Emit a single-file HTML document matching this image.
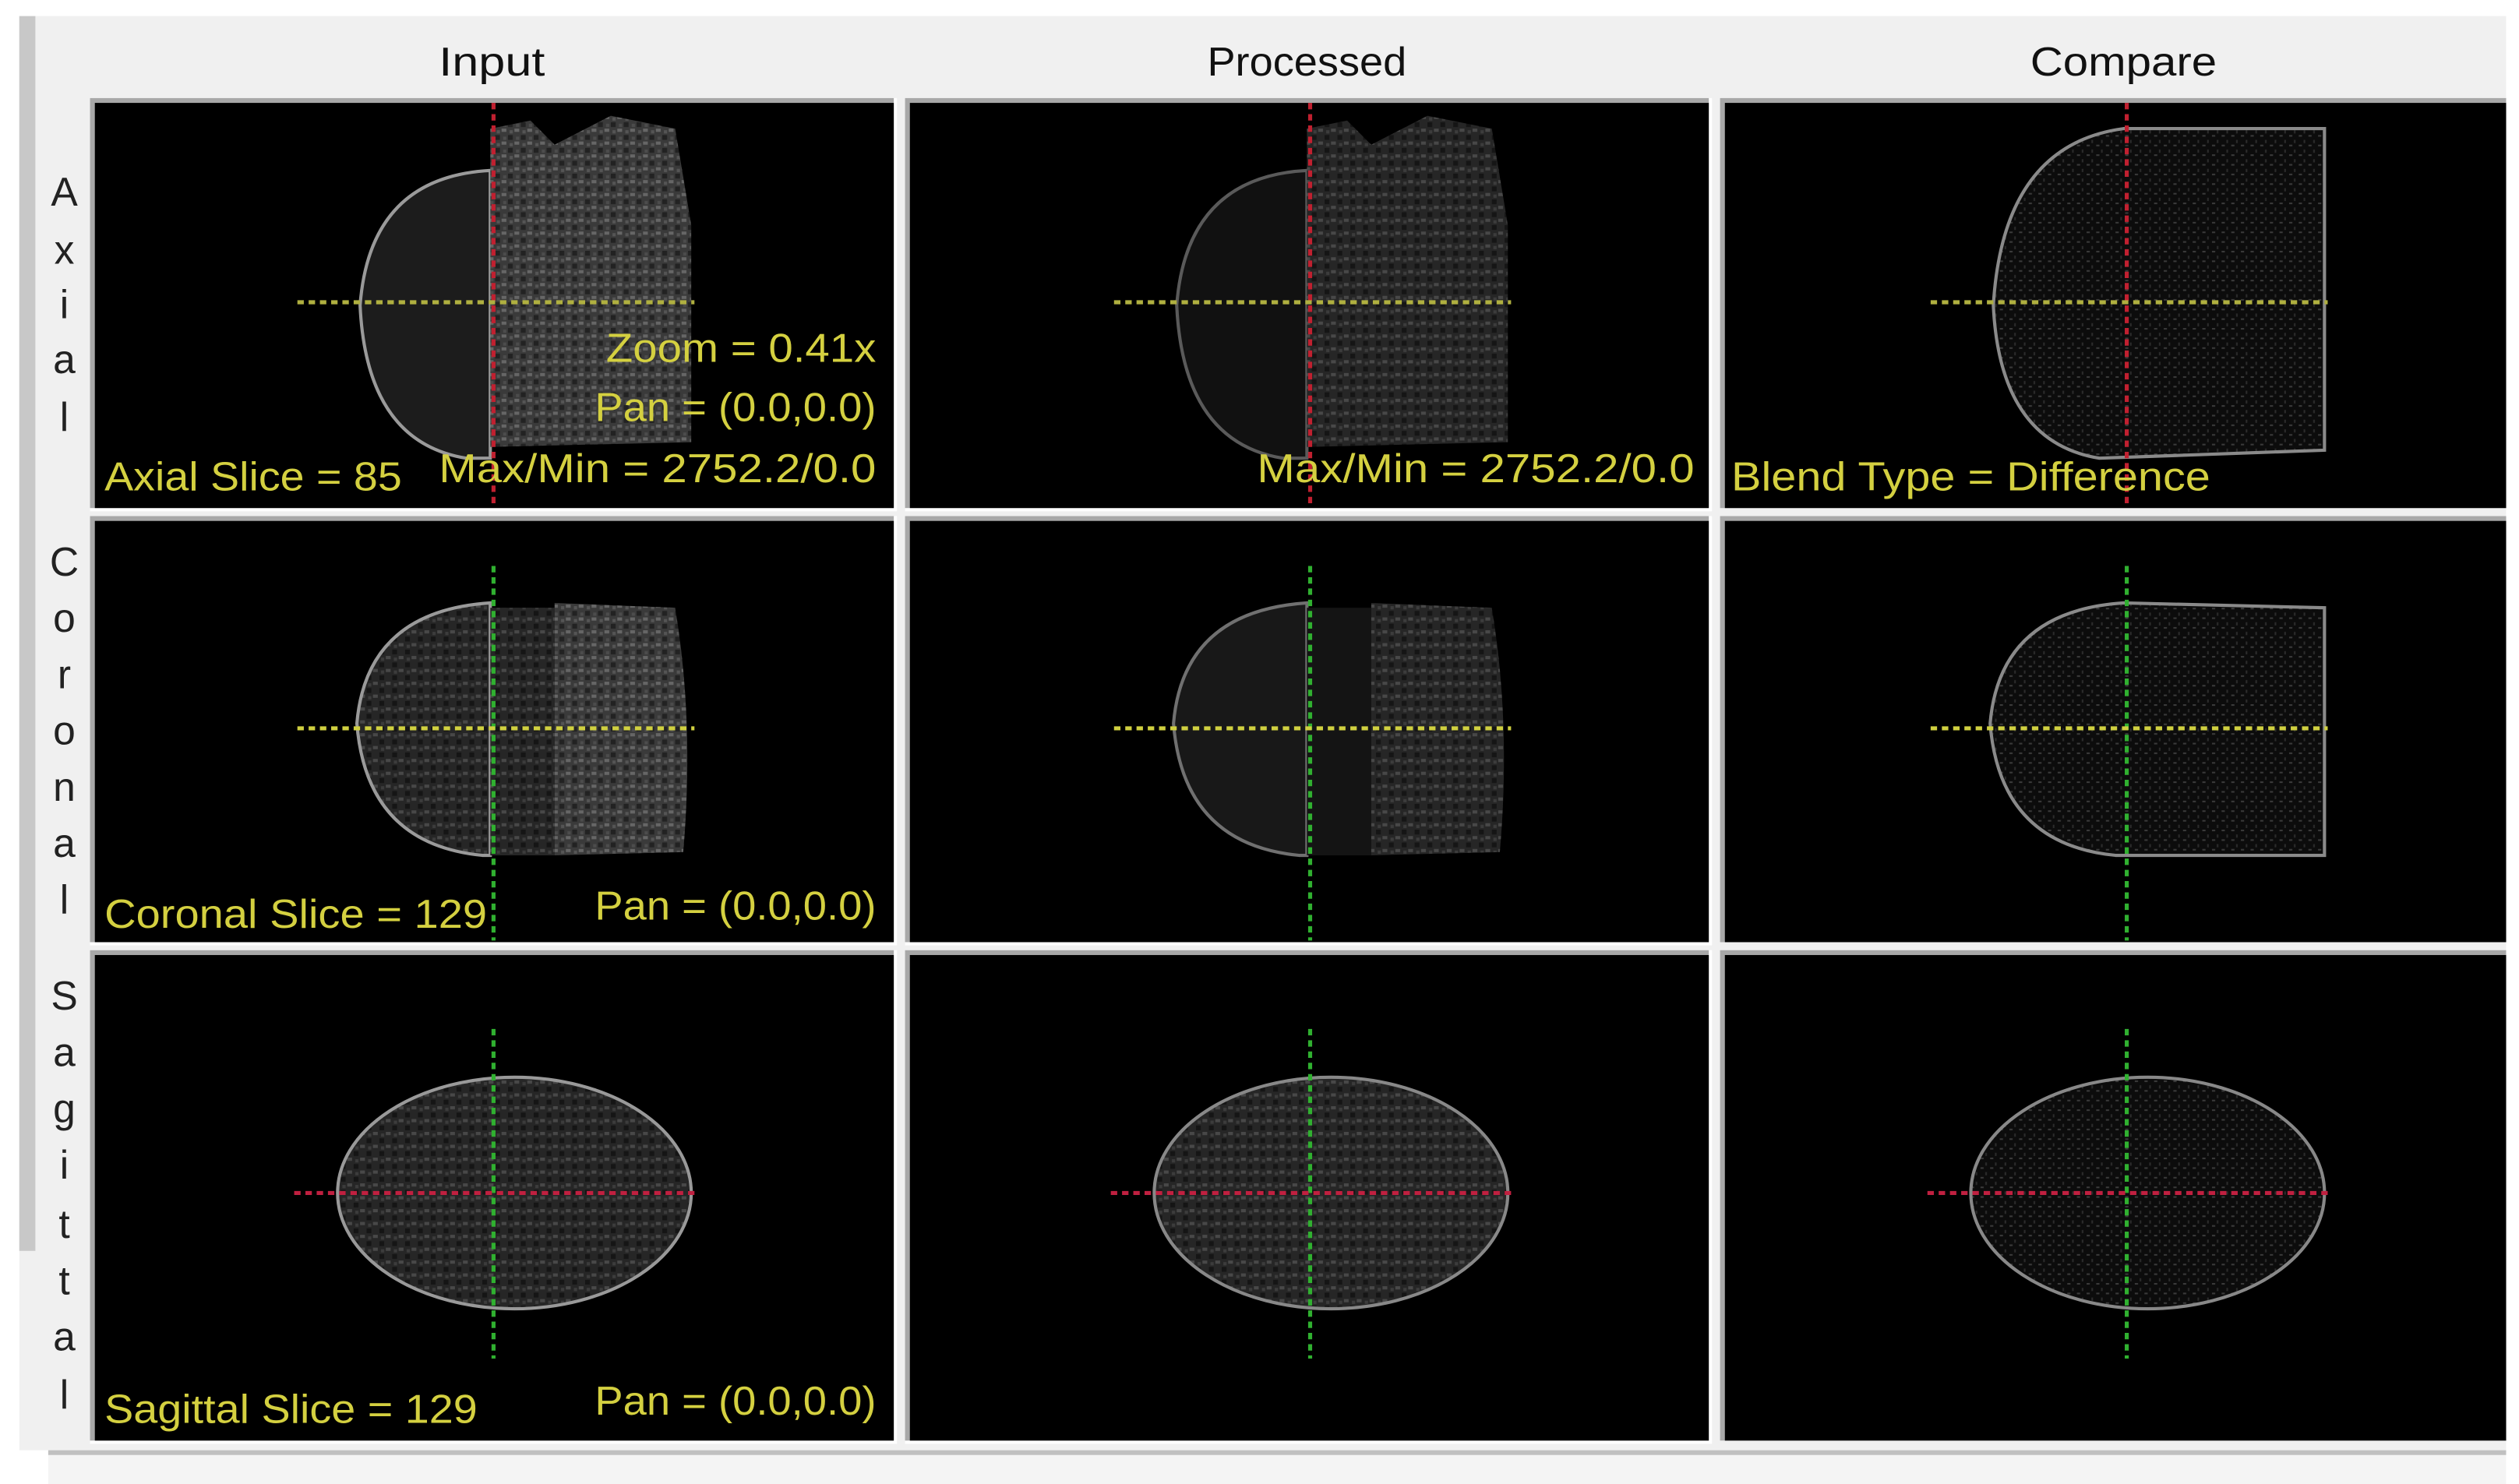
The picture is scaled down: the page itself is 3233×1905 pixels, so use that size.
<!DOCTYPE html>
<html><head><meta charset="utf-8"><style>
html,body{margin:0;padding:0;background:#fff;width:3233px;height:1905px;overflow:hidden}
svg{display:block}
text{font-family:"Liberation Sans",sans-serif}
.y{fill:#d4d040;font-size:25px}
.h{fill:#111;font-size:25px}
.v{fill:#222;font-size:25px;text-anchor:middle}
</style></head><body>
<svg width="3233" height="1905" viewBox="0 0 1567 923" preserveAspectRatio="none" xmlns="http://www.w3.org/2000/svg">
<defs>
<pattern id="tex" width="8" height="8" patternUnits="userSpaceOnUse">
<rect width="8" height="8" fill="#3a3a3a"/><rect x="0" y="0" width="3" height="2" fill="#666"/><rect x="4" y="4" width="3" height="3" fill="#222"/><rect x="5" y="1" width="2" height="2" fill="#555"/><rect x="1" y="5" width="2" height="2" fill="#4c4c4c"/>
</pattern>
<pattern id="tex2" width="8" height="8" patternUnits="userSpaceOnUse">
<rect width="8" height="8" fill="#262626"/><rect x="0" y="0" width="3" height="2" fill="#484848"/><rect x="4" y="4" width="3" height="3" fill="#151515"/><rect x="5" y="1" width="2" height="2" fill="#3c3c3c"/>
</pattern>
<pattern id="tex3" width="6" height="6" patternUnits="userSpaceOnUse">
<rect width="6" height="6" fill="#0c0c0c"/><rect x="0" y="0" width="2" height="1" fill="#3a3a3a"/><rect x="3" y="3" width="1" height="2" fill="#2c2c2c"/>
</pattern>
</defs>
<rect x="0" y="0" width="1567" height="923" fill="#fff"/>
<rect x="12" y="10" width="1547" height="892" fill="#f0f0f0"/>
<rect x="12" y="10" width="10" height="768" fill="#c8c8c8"/>
<rect x="30" y="902" width="1529" height="3" fill="#c0c0c0"/>
<rect x="30" y="905" width="1529" height="18" fill="#f4f4f4"/>

<text class="h" x="306" y="47" text-anchor="middle" textLength="66" lengthAdjust="spacingAndGlyphs">Input</text>
<text class="h" x="813" y="47" text-anchor="middle" textLength="124" lengthAdjust="spacingAndGlyphs">Processed</text>
<text class="h" x="1321" y="47" text-anchor="middle" textLength="116" lengthAdjust="spacingAndGlyphs">Compare</text>

<g class="v">
<text x="40" y="128">A</text><text x="40" y="164">x</text><text x="40" y="198">i</text><text x="40" y="232">a</text><text x="40" y="268">l</text>
<text x="40" y="358">C</text><text x="40" y="393">o</text><text x="40" y="428">r</text><text x="40" y="463">o</text><text x="40" y="498">n</text><text x="40" y="533">a</text><text x="40" y="568">l</text>
<text x="40" y="628">S</text><text x="40" y="663">a</text><text x="40" y="698">g</text><text x="40" y="733">i</text><text x="40" y="770">t</text><text x="40" y="805">t</text><text x="40" y="840">a</text><text x="40" y="876">l</text>
</g>

<g>
<rect x="56" y="61" width="502" height="257" fill="#fff"/><rect x="56" y="61" width="500" height="255" fill="#a8a8a8"/><rect x="59" y="64" width="497" height="252" fill="#000"/>
<rect x="56" y="321" width="502" height="267" fill="#fff"/><rect x="56" y="321" width="500" height="265" fill="#a8a8a8"/><rect x="59" y="324" width="497" height="262" fill="#000"/>
<rect x="56" y="591" width="502" height="307" fill="#fff"/><rect x="56" y="591" width="500" height="305" fill="#a8a8a8"/><rect x="59" y="594" width="497" height="302" fill="#000"/>
</g>
<g transform="translate(507,0)">
<rect x="56" y="61" width="502" height="257" fill="#fff"/><rect x="56" y="61" width="500" height="255" fill="#a8a8a8"/><rect x="59" y="64" width="497" height="252" fill="#000"/>
<rect x="56" y="321" width="502" height="267" fill="#fff"/><rect x="56" y="321" width="500" height="265" fill="#a8a8a8"/><rect x="59" y="324" width="497" height="262" fill="#000"/>
<rect x="56" y="591" width="502" height="307" fill="#fff"/><rect x="56" y="591" width="500" height="305" fill="#a8a8a8"/><rect x="59" y="594" width="497" height="302" fill="#000"/>
</g>
<g transform="translate(1014,0)">
<rect x="56" y="61" width="489" height="255" fill="#a8a8a8"/><rect x="59" y="64" width="486" height="252" fill="#000"/>
<rect x="56" y="321" width="489" height="265" fill="#a8a8a8"/><rect x="59" y="324" width="486" height="262" fill="#000"/>
<rect x="56" y="591" width="489" height="305" fill="#a8a8a8"/><rect x="59" y="594" width="486" height="302" fill="#000"/>
</g>

<g>
<path d="M305 106 Q230 110 224 190 Q228 275 290 285 L305 285 Z" fill="#1c1c1c" stroke="#9a9a9a" stroke-width="2"/>
<path d="M305 80 L330 75 L345 90 L380 72 L420 80 L430 140 L430 275 L305 278 Z" fill="url(#tex)"/>
<path d="M305 375 Q228 380 222 450 Q228 525 300 532 L305 532 Z" fill="url(#tex2)" stroke="#9a9a9a" stroke-width="2"/>
<rect x="305" y="378" width="40" height="154" fill="url(#tex2)"/>
<path d="M345 375 L420 378 Q432 450 425 530 L345 532 Z" fill="url(#tex)"/>
<ellipse cx="320" cy="742" rx="110" ry="72" fill="url(#tex2)" stroke="#999" stroke-width="2"/>
</g>
<g transform="translate(508,0)">
<path d="M305 106 Q230 110 224 190 Q228 275 290 285 L305 285 Z" fill="#111" stroke="#5a5a5a" stroke-width="2"/>
<path d="M305 80 L330 75 L345 90 L380 72 L420 80 L430 140 L430 275 L305 278 Z" fill="url(#tex2)"/>
<path d="M305 375 Q228 380 222 450 Q228 525 300 532 L305 532 Z" fill="#181818" stroke="#707070" stroke-width="2"/>
<rect x="305" y="378" width="40" height="154" fill="#141414"/>
<path d="M345 375 L420 378 Q432 450 425 530 L345 532 Z" fill="url(#tex2)"/>
<ellipse cx="320" cy="742" rx="110" ry="72" fill="url(#tex2)" stroke="#888" stroke-width="2"/>
</g>
<g transform="translate(1016,0)">
<path d="M305 80 Q230 90 224 190 Q228 275 290 285 L430 280 L430 80 Z" fill="url(#tex3)" stroke="#8a8a8a" stroke-width="2"/>
<path d="M305 375 Q228 380 222 450 Q228 525 300 532 L430 532 L430 378 Z" fill="url(#tex3)" stroke="#8a8a8a" stroke-width="2"/>
<ellipse cx="320" cy="742" rx="110" ry="72" fill="url(#tex3)" stroke="#888" stroke-width="2"/>
</g>

<g stroke-width="2.5" stroke-dasharray="4 3">
<g>
<line x1="307" y1="64" x2="307" y2="316" stroke="#c02030"/>
<line x1="185" y1="188" x2="432" y2="188" stroke="#b0b040"/>
<line x1="307" y1="352" x2="307" y2="585" stroke="#30b030"/>
<line x1="185" y1="453" x2="432" y2="453" stroke="#d0d040"/>
<line x1="307" y1="640" x2="307" y2="845" stroke="#30b030"/>
<line x1="183" y1="742" x2="434" y2="742" stroke="#c02040"/>
</g>
<g transform="translate(508,0)">
<line x1="307" y1="64" x2="307" y2="316" stroke="#c02030"/>
<line x1="185" y1="188" x2="432" y2="188" stroke="#b0b040"/>
<line x1="307" y1="352" x2="307" y2="585" stroke="#30b030"/>
<line x1="185" y1="453" x2="432" y2="453" stroke="#d0d040"/>
<line x1="307" y1="640" x2="307" y2="845" stroke="#30b030"/>
<line x1="183" y1="742" x2="434" y2="742" stroke="#c02040"/>
</g>
<g transform="translate(1016,0)">
<line x1="307" y1="64" x2="307" y2="316" stroke="#c02030"/>
<line x1="185" y1="188" x2="432" y2="188" stroke="#b0b040"/>
<line x1="307" y1="352" x2="307" y2="585" stroke="#30b030"/>
<line x1="185" y1="453" x2="432" y2="453" stroke="#d0d040"/>
<line x1="307" y1="640" x2="307" y2="845" stroke="#30b030"/>
<line x1="183" y1="742" x2="434" y2="742" stroke="#c02040"/>
</g>
</g>

<text class="y" x="545" y="225" text-anchor="end" textLength="168" lengthAdjust="spacingAndGlyphs">Zoom = 0.41x</text>
<text class="y" x="545" y="262" text-anchor="end" textLength="175" lengthAdjust="spacingAndGlyphs">Pan = (0.0,0.0)</text>
<text class="y" x="65" y="305" textLength="185" lengthAdjust="spacingAndGlyphs">Axial Slice = 85</text>
<text class="y" x="545" y="300" text-anchor="end" textLength="272" lengthAdjust="spacingAndGlyphs">Max/Min = 2752.2/0.0</text>
<text class="y" x="1054" y="300" text-anchor="end" textLength="272" lengthAdjust="spacingAndGlyphs">Max/Min = 2752.2/0.0</text>
<text class="y" x="1077" y="305" textLength="298" lengthAdjust="spacingAndGlyphs">Blend Type = Difference</text>
<text class="y" x="65" y="577" textLength="238" lengthAdjust="spacingAndGlyphs">Coronal Slice = 129</text>
<text class="y" x="545" y="572" text-anchor="end" textLength="175" lengthAdjust="spacingAndGlyphs">Pan = (0.0,0.0)</text>
<text class="y" x="65" y="885" textLength="232" lengthAdjust="spacingAndGlyphs">Sagittal Slice = 129</text>
<text class="y" x="545" y="880" text-anchor="end" textLength="175" lengthAdjust="spacingAndGlyphs">Pan = (0.0,0.0)</text>
</svg>
</body></html>
